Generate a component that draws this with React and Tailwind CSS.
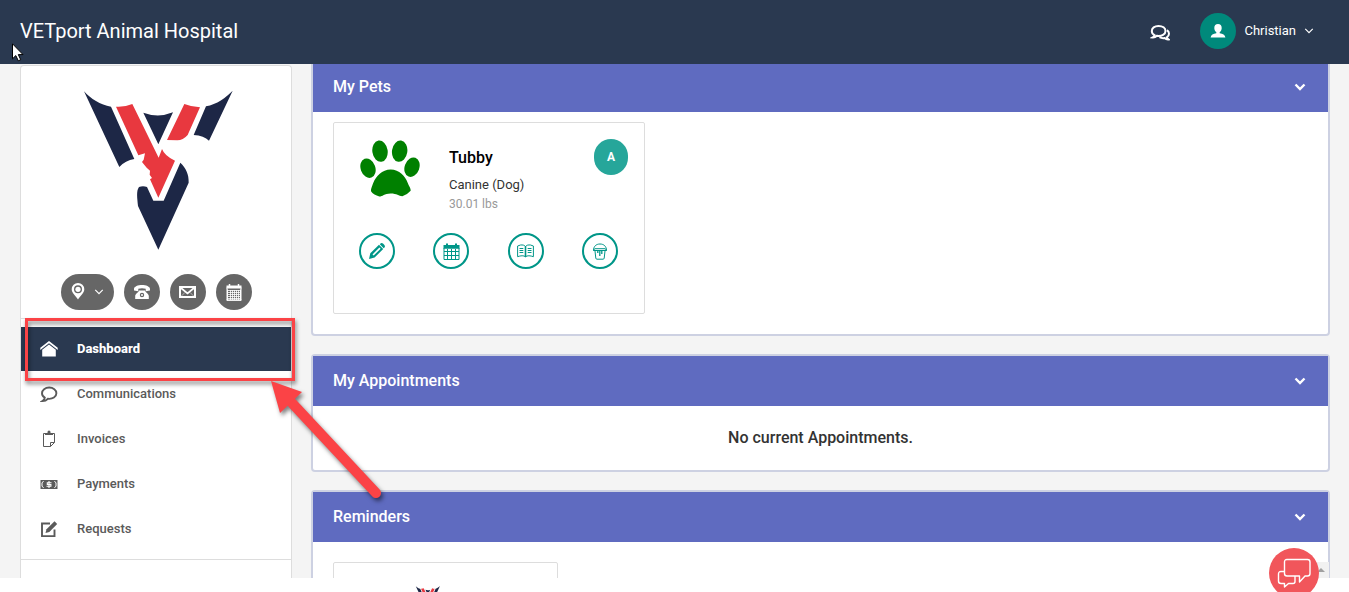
import React from "react";

const navItems = [
  { label: "Communications", Icon: BubbleIcon },
  { label: "Invoices", Icon: ClipboardIcon },
  { label: "Payments", Icon: CashIcon },
  { label: "Requests", Icon: ComposeIcon },
];

function VetLogo({ className }) {
  return (
    <svg viewBox="27 30 462 480" className={className} role="img" aria-label="VETport logo">
      <g fill="#1d2746">
        <path d="M42 34C62 56 91 75 123 80L193 237Q166 241 148 261Z" />
        <path d="M488 32C468 53 440 73 408 79L371 165Q402 167 417 182Z" />
        <path d="M220 98Q265 115 309 97L265 193Z" />
        <path d="M331 248C348 264 357 283 356 308L265 509L204 378C202 355 198 333 207 321Q219 317 231 321L250 362H281Z" />
      </g>
      <g fill="#e8383f">
        <path d="M138 80Q163 82 187 72L266 233L276 207Q284 228 315 242L265 353L240 298L246 294L239 284L240 272L230 263L216 246L221 239L225 220L205 226Z" />
        <path d="M343 72Q366 81 390 82L353 165Q339 181 322 181L291 180Z" />
      </g>
    </svg>
  );
}

function ChevronDown({ className, weight }) {
  return (
    <svg viewBox="0 0 12 12" className={className} fill="none" stroke="currentColor" strokeWidth={weight} aria-hidden="true">
      <path d="M1.500 3.500 6 8l4.500-4.500" />
    </svg>
  );
}

function BubblesIcon({ className }) {
  return (
    <svg viewBox="0 0 20 18" className={className} fill="none" stroke="currentColor" strokeWidth="2" aria-hidden="true">
      <path d="M8.500 2C4.500 2 1.800 4.100 1.800 7c0 1.800 1 3.300 2.700 4.100-.2 1-.8 1.700-1.800 2.300 1.800.1 3.100-.5 4.200-1.600 5 .6 8.600-1.500 8.600-4.800C15.500 4.100 12.700 2 8.500 2Z" />
      <path d="M17 6.200c1.500 1 2 2.200 2 3.600 0 1.500-.8 2.700-2.200 3.500.2.900.8 1.600 1.600 2.100-1.500.1-2.800-.4-3.700-1.300-1.900.3-3.700 0-5.200-.9" />
    </svg>
  );
}

function PersonIcon({ className }) {
  return (
    <svg viewBox="0 0 16 16" className={className} fill="currentColor" aria-hidden="true">
      <path d="M8 1C5.600 1 4.300 2.600 4.300 5c0 1.900.8 3.400 2 4.100v1.200C3.200 10.600 1 11.800.6 14.500h14.800c-.4-2.700-2.600-3.900-5.700-4.200V9.100c1.200-.7 2-2.200 2-4.100C11.700 2.600 10.400 1 8 1Z" />
    </svg>
  );
}

function PinIcon({ className }) {
  return (
    <svg viewBox="0 0 16 18" className={className} fill="currentColor" fillRule="evenodd" aria-hidden="true">
      <path d="M8 0a6.300 6.300 0 0 0-6.300 6.300C1.700 10.300 6 13 8 16.500c2-3.500 6.300-6.200 6.300-10.200A6.300 6.300 0 0 0 8 0Zm0 2.300a4 4 0 1 1 0 8 4 4 0 0 1 0-8Z" />
      <circle cx="8" cy="6.300" r="2.600" />
    </svg>
  );
}

function PhoneIcon({ className }) {
  return (
    <svg viewBox="0 0 16 16" className={className} fill="currentColor" fillRule="evenodd" aria-hidden="true">
      <path d="M0 5C0 2.500 4 1 8 1s8 1.500 8 4v1.500l-4.300.7V4.800a14 14 0 0 0-7.400 0v2.400L0 6.500Z" />
      <path d="M5 6.500h6c.2 1.900 3.800 3.200 3.800 5.500v3H1.200v-3c0-2.300 3.600-3.600 3.800-5.500ZM8 8.800a2.200 2.200 0 1 0 0 4.400 2.200 2.200 0 0 0 0-4.400Z" />
      <circle cx="8" cy="11" r="1" />
    </svg>
  );
}

function MailIcon({ className }) {
  return (
    <svg viewBox="0 0 17 12" className={className} fill="none" stroke="currentColor" strokeWidth="2" aria-hidden="true">
      <path d="M1 1h15v10H1Z" />
      <path strokeWidth="1.700" d="M2 2l6.500 5.500L15 2" />
      <path strokeWidth="1" d="M2 10.500l3.800-4M15 10.500l-3.800-4" opacity=".5" />
    </svg>
  );
}

function CalendarSheetIcon({ className }) {
  return (
    <svg viewBox="0 0 16 17" className={className} fill="none" stroke="currentColor" aria-hidden="true">
      <path d="M1 3.500v12.800h14V3.500M1.500 5.500v11M14.500 5.500v11M.5 16h15" />
      <path strokeWidth="3" d="M.5 3h15" />
      <path strokeWidth="1.500" d="M3.500 0v2M12.500 0v2" />
      <path d="M2 6.500h12M2 8.500h12M2 10.500h12M2 12.500h12M2 14.500h12M4.500 6v10M6.500 6v10M8.500 6v10M10.500 6v10M12.500 6v10" strokeWidth=".8" />
    </svg>
  );
}

function HomeIcon({ className }) {
  return (
    <svg viewBox="0 0 18 16" className={className} fill="currentColor" aria-hidden="true">
      <path d="M9 0 .3 6.800V9L9 2.300 17.700 9V6.800Z" />
      <path d="M9 3.600 2.200 8.800V15.500h13.600V8.800Z" />
    </svg>
  );
}

function BubbleIcon({ className }) {
  return (
    <svg viewBox="0 0 18 18" className={className} fill="none" stroke="currentColor" strokeWidth="1.900" aria-hidden="true">
      <path d="M9.200 2.500c-4 0-7.200 2.500-7.200 5.700 0 1.900 1 3.500 2.800 4.500-.2 1.400-1 2.500-2.300 3.300 2.300 0 4-.8 5.300-2.200 4.900.6 8.600-2 8.600-5.600 0-3.200-3.200-5.700-7.200-5.700Z" />
    </svg>
  );
}

function ClipboardIcon({ className }) {
  return (
    <svg viewBox="0 0 18 18" className={className} fill="none" stroke="currentColor" aria-hidden="true">
      <path d="M5 3.500H3.500v13h7l4-4v-9H13M10.500 16.500v-4h4" />
      <path fill="currentColor" stroke="none" d="M5 5V3h2.500V2a1.500 1.500 0 0 1 3 0v1H13v2Z" />
    </svg>
  );
}

function CashIcon({ className }) {
  return (
    <svg viewBox="0 0 18 18" className={className} aria-hidden="true">
      <path fill="currentColor" d="M.5 5h17v9H.5Z" />
      <path fill="none" stroke="#fff" d="M3.500 6.200A3 3 0 0 1 2 7.700v3.600a3 3 0 0 1 1.500 1.500M14.500 6.200A3 3 0 0 0 16 7.700v3.600a3 3 0 0 0-1.500 1.500" />
      <path fill="none" stroke="#fff" strokeWidth="1.100" d="M11.500 7.800H7.300v1.700h3.600v1.800H6.500M9 6v7" />
    </svg>
  );
}

function ComposeIcon({ className }) {
  return (
    <svg viewBox="0 0 18 18" className={className} fill="none" stroke="currentColor" strokeWidth="1.900" aria-hidden="true">
      <path d="M10 3.500H2v12.600h12.500V9.500" />
      <path fill="currentColor" stroke="none" d="M5.500 13l1-3.800L14.500 1.200l2.700 2.700-7.900 8.100Z" />
    </svg>
  );
}

function PawIcon({ className }) {
  return (
    <svg viewBox="0 0 180 170" className={className} fill="#008000" role="img" aria-label="Paw">
      <ellipse cx="60" cy="33" rx="23" ry="32" transform="rotate(-8 60 33)" />
      <ellipse cx="119" cy="33" rx="23" ry="32" transform="rotate(8 119 33)" />
      <ellipse cx="24" cy="84" rx="22" ry="30" transform="rotate(-20 24 84)" />
      <ellipse cx="156" cy="81" rx="22" ry="30" transform="rotate(20 156 81)" />
      <path d="M92 88C66 88 48 108 40 128C36 139 31 149 34 155Q41 164 58 169C68 169 72 161 92 160C111 160 116 168 127 168Q143 163 152 152C153 145 146 137 143 128C136 108 118 88 92 88Z" />
    </svg>
  );
}

function PencilIcon({ className }) {
  return (
    <svg viewBox="0 0 16 16" className={className} fill="currentColor" fillRule="evenodd" aria-hidden="true">
      <path d="M0 16 1.300 10.300 10 1.700l4.200 4.200-8.600 8.700ZM3.500 11.400l1.200 1.200 6.900-6.900-1.200-1.200ZM10.800 1.200 11.800.3Q13-.3 14 .6l1.400 1.400q.9 1.100.3 2.200l-1 1Z" />
    </svg>
  );
}

function CalendarIcon({ className }) {
  return (
    <svg viewBox="0 0 17 17" className={className} fill="none" stroke="currentColor" aria-hidden="true">
      <path fill="currentColor" stroke="none" d="M.5 2h2.500V.5h2V2h7V.5h2V2h2.500v3.800H.5Z" />
      <path d="M1 5v11.500h15V5M1 8.500h15M1 12.500h15M4.500 6v10M8.500 6v10M12.500 6v10" />
    </svg>
  );
}

function BookIcon({ className }) {
  return (
    <svg viewBox="0 0 17 14" className={className} fill="none" stroke="currentColor" aria-hidden="true">
      <path d="M8.500 2.500C7.500 1 5.500.8 3.500 1L.6 2v10.700C3.500 11.600 7 11.300 8.500 12.800 10 11.300 13.500 11.600 16.400 12.700V2l-2.900-1c-2-.2-4 0-5 1.500Z" />
      <path strokeWidth="1.600" d="M8.500 2v11" />
      <path d="M2.500 4.500h3.800M2.500 6.500h3.800M2.500 8.500h3.800M10.700 4.500h3.800M10.700 6.500h3.800M10.700 8.500h3.800" />
    </svg>
  );
}

function BucketIcon({ className }) {
  return (
    <svg viewBox="0 0 16 17" className={className} fill="none" stroke="currentColor" aria-hidden="true">
      <path d="M1.500 7.500C1.500 3.500 4 1 8 1s6.500 2.500 6.500 6.500M1 7.500l2-1.800h10l2 1.800" />
      <path d="M1.500 7.500h13M3 8l.8 7.200q.2 1 1.200 1h6q1 0 1.200-1L13 8" />
      <path strokeWidth="1.300" d="M5.800 8v2M7.800 8v5M9.800 8v3" />
    </svg>
  );
}

function ChatIcon({ className }) {
  return (
    <svg viewBox="0 0 34 30" className={className} fill="none" stroke="#fff" strokeWidth="1.400" strokeLinejoin="round" aria-hidden="true">
      <path d="M10 1.500h20.500Q33 1.500 33 4v11.500Q33 18 30.500 18H28l-5.500 6V18H10Q7.500 18 7.500 15.500V4Q7.500 1.500 10 1.500Z" />
      <path d="M7.500 13.500H4Q1.500 13.500 1.500 16v7Q1.500 25.500 4 25.500h3.500V29l4-3.500h4.500Q18 25.500 18 23.500V18" />
    </svg>
  );
}

function Panel({ title, children }) {
  return (
    <section className="shrink-0 rounded-sm border-2 border-[#cdd1e2] bg-white">
      <header className="flex h-[50px] items-center justify-between bg-[#5f6bc0] pl-5 pr-[22px] text-white">
        <h2 className="text-base font-medium">{title}</h2>
        <button type="button" aria-label={`Collapse ${title}`}>
          <ChevronDown className="size-3" weight="2.400" />
        </button>
      </header>
      {children}
    </section>
  );
}

function RoundAction({ label, children }) {
  return (
    <button type="button" aria-label={label} className="flex size-9 items-center justify-center rounded-full border-2 border-[#009688] text-[#009688]">
      {children}
    </button>
  );
}

function RoundContact({ label, children }) {
  return (
    <button type="button" aria-label={label} className="flex size-9 items-center justify-center rounded-full bg-[#666] text-white">
      {children}
    </button>
  );
}

export default function App() {
  return (
    <div className="relative flex h-screen flex-col overflow-hidden bg-white font-['Roboto',sans-serif] text-[13px] text-[#333]">
      <header className="flex h-16 shrink-0 items-center justify-between bg-[#2a3950] pl-5 pr-[35px] text-white">
        <h1 className="pb-0.5 text-xl">VETport Animal Hospital</h1>
        <div className="flex items-center pb-0.5">
          <button type="button" aria-label="Messages" className="mr-[30px] pt-1">
            <BubblesIcon className="h-[18px] w-5" />
          </button>
          <button type="button" className="flex items-center gap-2">
            <span className="flex size-9 items-center justify-center rounded-full bg-[#00897b]">
              <PersonIcon className="size-4" />
            </span>
            <span>Christian</span>
            <ChevronDown className="size-2.5" weight="1.400" />
          </button>
        </div>
      </header>

      <div className="flex min-h-0 flex-1 gap-[19px] overflow-hidden bg-[#f4f4f4] pl-5 pr-[19px]">
        <aside className="mt-px w-[272px] shrink-0 rounded-t-sm border border-b-0 border-[#ddd] bg-white">
          <div className="flex flex-col items-center border-b border-[#ddd] pb-2 pt-6">
            <VetLogo className="h-40 w-[154px]" />
            <div className="mt-6 flex gap-2.5">
              <button type="button" aria-label="Locations" className="flex h-9 w-[53px] items-center justify-center gap-2 rounded-full bg-[#666] text-white">
                <PinIcon className="h-[18px] w-4" />
                <ChevronDown className="size-2.5" weight="1.400" />
              </button>
              <RoundContact label="Call"><PhoneIcon className="size-4" /></RoundContact>
              <RoundContact label="Email"><MailIcon className="h-3 w-[17px]" /></RoundContact>
              <RoundContact label="Book"><CalendarSheetIcon className="h-[17px] w-4" /></RoundContact>
            </div>
          </div>
          <nav className="flex flex-col gap-px border-b border-[#ddd] py-2">
            <a href="#dashboard" className="flex h-11 items-center gap-[19px] bg-[#2a3950] pl-[19px] font-extrabold text-white">
              <HomeIcon className="h-4 w-[18px]" />
              Dashboard
            </a>
            {navItems.map(({ label, Icon }) => (
              <a key={label} href={`#${label.toLowerCase()}`} className="flex h-11 items-center gap-[19px] pl-[19px] font-medium text-[#5a5a5a]">
                <Icon className="size-[18px]" />
                {label}
              </a>
            ))}
          </nav>
        </aside>

        <main className="-mt-1 flex min-w-0 flex-1 flex-col gap-[18px]">
          <Panel title="My Pets">
            <div className="px-5 pb-5 pt-2.5">
              <article className="h-48 w-[312px] rounded-xs border border-[#ddd] pl-[25px] pr-[26px] pt-4">
                <div className="flex items-start gap-[29px]">
                  <PawIcon className="ml-px mt-px h-[57px] w-[60px]" />
                  <div className="flex-1 pt-[7px]">
                    <h3 className="text-base font-medium text-black">Tubby</h3>
                    <p className="mt-[5px] leading-[19px]">Canine (Dog)</p>
                    <p className="text-xs leading-5 text-[#999]">30.01 lbs</p>
                  </div>
                  <span className="-mr-2.5 flex h-9 w-[34px] items-center justify-center rounded-full bg-[#26a69a] text-xs font-bold text-white">A</span>
                </div>
                <div className="mt-[19px] flex justify-between">
                  <RoundAction label="Edit"><PencilIcon className="size-4" /></RoundAction>
                  <RoundAction label="Schedule"><CalendarIcon className="size-[17px]" /></RoundAction>
                  <RoundAction label="Records"><BookIcon className="h-3.5 w-[17px]" /></RoundAction>
                  <RoundAction label="Food"><BucketIcon className="h-[17px] w-4" /></RoundAction>
                </div>
              </article>
            </div>
          </Panel>
          <Panel title="My Appointments">
            <p className="py-5 text-center text-base font-medium">No current Appointments.</p>
          </Panel>
          <Panel title="Reminders">
            <div className="p-5">
              <div className="h-24 w-[225px] rounded-xs border border-[#ddd]" />
            </div>
          </Panel>
        </main>
      </div>

      <footer className="h-3.5 shrink-0 overflow-hidden pl-[415px] pt-2">
        <VetLogo className="h-[26px] w-[25px]" />
      </footer>

      <div className="absolute bottom-3.5 right-5 flex h-4 w-5 items-center justify-end bg-[#f1f1f1] pr-1">
        <svg viewBox="0 0 8 4" className="h-1 w-2" fill="#a0a0a0" aria-hidden="true"><path d="M4 0 8 4H0Z" /></svg>
      </div>
      <button type="button" aria-label="Open chat" className="absolute -bottom-1.5 right-[30px] flex size-[50px] items-center justify-center rounded-full bg-[#f1565b]">
        <ChatIcon className="h-[30px] w-[34px]" />
      </button>

      <div className="pointer-events-none absolute left-[25px] top-[318px] h-[63px] w-[270px] border-[3px] border-[#fb4346] drop-shadow-[1px_3px_2px_rgba(0,0,0,0.5)]" />
      <svg viewBox="0 0 120 125" className="pointer-events-none absolute left-[270px] top-[380px] h-[125px] w-[120px] drop-shadow-[2px_3px_2px_rgba(0,0,0,0.5)]" aria-hidden="true">
        <path d="M22 23 106 113" stroke="#fb4346" strokeWidth="10" strokeLinecap="round" />
        <path d="M1 1 32 12 10 33Z" fill="#fb4346" />
      </svg>
      <svg viewBox="0 0 12 19" className="pointer-events-none absolute left-3 top-[43px] h-[19px] w-3" aria-hidden="true">
        <path d="M.5.800v15l3.300-3.200 2.500 5.200 2.400-1.100-2.400-5.100H11Z" fill="#fff" stroke="#000" />
      </svg>
    </div>
  );
}
